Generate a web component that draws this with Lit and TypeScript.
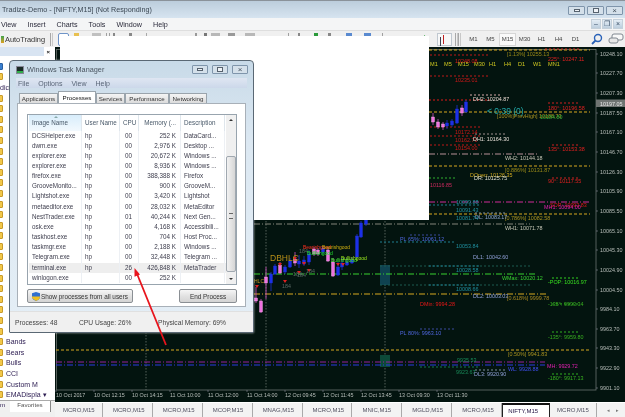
import { LitElement, html, css, svg } from "lit";
import { customElement } from "lit/decorators.js";

const PRICES: [string, number][] = [
  ["10248.10", 54], ["10227.70", 73], ["10207.30", 93], ["10187.50", 113], ["10167.10", 132],
  ["10146.70", 152], ["10126.30", 172], ["10105.90", 191], ["10085.50", 211], ["10065.10", 231],
  ["10045.30", 250], ["10024.90", 270], ["10004.50", 290], ["9984.10", 309], ["9963.70", 329],
  ["9943.30", 348], ["9922.90", 368], ["9901.10", 388],
];
const TIMES: [string, number][] = [
  ["10 Oct 2017", 56], ["10 Oct 12:15", 94], ["10 Oct 14:15", 132], ["11 Oct 10:00", 170], ["11 Oct 12:00", 208],
  ["11 Oct 14:00", 247], ["12 Oct 09:45", 285], ["12 Oct 11:45", 323], ["12 Oct 13:45", 361], ["13 Oct 09:30", 399], ["13 Oct 11:30", 437],
];
// x1, x2, y, colour, dash pattern
const LINES: [number, number, number, string, string][] = [
  [429, 590, 50, "#d8a820", "3 2"], [545, 580, 49, "#d02020", "2 2"], [430, 490, 55, "#c01818", "2 2"],
  [430, 490, 76, "#c01818", "2 2"], [470, 500, 95, "#d8a8a8", "2 2"], [429, 490, 100, "#e01818", "2 2"],
  [548, 578, 103, "#d02020", "2 2"], [429, 590, 112, "#d8a820", "3 2"], [430, 480, 127, "#c01818", "2 2"],
  [430, 480, 136, "#c01818", "2 2"], [430, 480, 145, "#c01818", "2 2"], [552, 578, 145, "#d02020", "2 2"],
  [475, 505, 134, "#a09090", "2 2"], [429, 537, 154, "#b89098", "6 2 1 2"], [429, 590, 166, "#d8a820", "3 2"],
  [552, 578, 178, "#d02020", "2 2"], [429, 455, 178, "#30b030", "2 2"], [429, 590, 202, "#d02a98", "6 2 1 2"],
  [429, 480, 205, "#1f7f90", "2 2"], [429, 590, 214, "#d8a820", "3 2"], [475, 505, 213, "#8090a0", "2 2"],
  [254, 530, 224, "#84847a", "6 2 1 2"], [380, 455, 242, "#1f7f90", "2 2"], [410, 440, 235, "#3a4aa0", "2 2"],
  [380, 530, 266, "#1d5a50", "2 2"], [429, 480, 266, "#1f7f90", "2 2"], [254, 537, 274, "#38d030", "6 2 1 2"],
  [552, 578, 278, "#30d020", "2 2"], [380, 530, 285, "#1d5a50", "2 2"], [429, 480, 285, "#1f7f90", "2 2"],
  [254, 548, 294, "#d8a820", "6 2 1 2"], [552, 578, 304, "#30b020", "2 2"], [552, 578, 332, "#30b020", "2 2"],
  [420, 455, 329, "#3a4aa0", "2 2"], [56, 590, 350, "#d8a820", "3 2"], [56, 545, 362, "#96209a", "6 2 1 2"],
  [56, 545, 365, "#2a3ae0", "6 2 1 2"], [420, 480, 367, "#147a50", "2 2"], [475, 505, 370, "#8090a0", "2 2"],
  [552, 578, 374, "#30b020", "2 2"],
];
// x, y, text, colour
const LABELS: [number, number, string, string][] = [
  [507, 56, "[1.13%] 10255.13", "#9a8a18"], [548, 61, "225°: 10247.11", "#e02020"], [455, 63, "10248.08", "#e01818"],
  [455, 82, "10235.01", "#d01818"], [473, 101, "DH2: 10204.87", "#e8d8d0"], [548, 110, "180°: 10196.58", "#e02020"],
  [497, 118, "[100%]PrevHigh] 10188.73", "#aa9220"], [540, 119, "10184.80", "#30b038"], [455, 134, "10172.14", "#d01818"],
  [455, 142, "10162.70", "#d01818"], [455, 150, "10154.00", "#d01818"], [473, 141, "DH1: 10164.30", "#e8e0d8"],
  [548, 151, "135°: 10153.38", "#e02020"], [505, 160, "WH2: 10144.18", "#c8c8b8"], [505, 172, "[0.886%] 10131.87", "#9a8a18"],
  [470, 177, "DOpen: 10126.35", "#d0aa20"], [474, 180, "DR: 10125.75", "#e0e0d0"], [548, 183, "90°: 10117.55", "#e02020"],
  [430, 187, "10116.85", "#d02a60"], [456, 204, "10099.88", "#2090a0"], [550, 207, "SOP: 10093.83", "#e01818"],
  [544, 209, "MH1: 10094.00", "#e020b0"], [456, 212, "10091.43", "#2090a0"], [505, 220, "[0.786%] 10082.58", "#aa9220"],
  [475, 219, "DL: 10083.17", "#90a8d0"], [456, 220, "10081.74", "#2090a0"], [505, 230, "WH1: 10071.78", "#c8c8b8"],
  [400, 241, "PL 65%: 10061.12", "#5068e0"], [456, 248, "10053.84", "#2090a0"], [473, 259, "DL1: 10042.60", "#90a0d8"],
  [456, 272, "10028.58", "#2090a0"], [502, 280, "WMax: 10020.12", "#38d030"], [548, 284, "-POP: 10016.97", "#38e020"],
  [456, 291, "10008.66", "#2090a0"], [473, 298, "DL2: 10003.03", "#90a0d8"], [507, 300, "[0.618%] 9999.78", "#aa8820"],
  [420, 306, "DMin: 9994.28", "#e81818"], [548, 306, "-135°: 9993.34", "#38b020"], [400, 335, "PL 80%: 9963.10", "#5068e0"],
  [548, 339, "-135°: 9959.80", "#38b020"], [508, 356, "[0.50%] 9941.83", "#aa9220"], [457, 362, "9935.53", "#188a58"],
  [547, 368, "MH: 9929.72", "#e020b0"], [508, 371, "WL: 9928.88", "#4050f0"], [456, 374, "9923.67", "#188a58"],
  [474, 376, "DL3: 9920.90", "#90a0d8"], [548, 380, "-180°: 9917.13", "#38b020"],
];
const TF: [number, string][] = [[430, "M1"], [444, "M5"], [458, "M15"], [474, "M30"], [489, "H1"], [504, "H4"], [518, "D1"], [533, "W1"], [548, "MN1"]];
// x, body top, body bottom, wick top, wick bottom, up?
const CANDLES: [number, number, number, number, number, boolean][] = [
  [256, 298, 301, 287, 303, false], [261, 301, 312, 299, 313, false], [266, 277, 283, 267, 299, false],
  [271, 274, 283, 272, 291, true], [275, 266, 274, 264, 275, true], [280, 265, 273, 262, 274, false],
  [285, 267, 272, 265, 274, true], [290, 261, 267, 258, 268, true], [295, 259, 263, 252, 266, false],
  [299, 261, 264, 255, 268, true], [304, 260, 264, 256, 266, true], [309, 254, 262, 250, 265, true],
  [314, 249, 254, 247, 256, false], [318, 250, 254, 248, 256, false], [323, 248, 252, 246, 254, true],
  [328, 250, 261, 247, 262, false], [333, 262, 276, 258, 277, false], [338, 267, 275, 262, 276, true],
  [342, 263, 267, 258, 270, true], [347, 262, 265, 258, 266, true], [352, 260, 263, 257, 264, true],
  [357, 236, 257, 234, 258, true], [361, 223, 237, 221, 238, true], [366, 220, 224, 218, 226, true],
  [433, 117, 122, 113, 125, false], [438, 122, 127, 119, 129, false], [443, 124, 127, 122, 130, false],
  [447, 123, 126, 120, 129, true], [452, 121, 125, 119, 127, true], [457, 109, 123, 105, 124, true],
  [462, 108, 113, 105, 116, false], [466, 102, 112, 100, 113, true],
];
const MARKS: [number, number][] = [[257, 285], [280, 263], [285, 280], [295, 257], [299, 271], [304, 262], [309, 269], [338, 263], [343, 263]];
const COUNTS: [number, number][] = [[282, 288], [293, 276], [297, 277], [299, 253], [306, 273]];
const TAGS: [number, number, string, string][] = [
  [303, 249, "Bearishgood", "#ff3020"], [322, 249, "Bearishgood", "#d0b010"], [307, 255, "Bullishgood", "#20e030"],
  [331, 262, "Bullishgood", "#40f030"], [341, 260, "Bullishgood", "#a0f020"], [254, 283, "HLC", "#c09a20"],
];

const ROWS: [string, string, string, string, string][] = [
  ["DCSHelper.exe", "hp", "00", "252 K", "DataCard..."], ["dwm.exe", "hp", "00", "2,976 K", "Desktop ..."],
  ["explorer.exe", "hp", "00", "20,672 K", "Windows ..."], ["explorer.exe", "hp", "00", "8,936 K", "Windows ..."],
  ["firefox.exe", "hp", "00", "388,388 K", "Firefox"], ["GrooveMonito...", "hp", "00", "900 K", "GrooveM..."],
  ["Lightshot.exe", "hp", "00", "3,420 K", "Lightshot"], ["metaeditor.exe", "hp", "00", "28,032 K", "MetaEditor"],
  ["NestTrader.exe", "hp", "01", "40,244 K", "Next Gen..."], ["osk.exe", "hp", "00", "4,168 K", "Accessibili..."],
  ["taskhost.exe", "hp", "00", "704 K", "Host Proc..."], ["taskmgr.exe", "hp", "00", "2,188 K", "Windows ..."],
  ["Telegram.exe", "hp", "00", "32,448 K", "Telegram ..."], ["terminal.exe", "hp", "26", "426,848 K", "MetaTrader"],
  ["winlogon.exe", "", "00", "252 K", ""],
];
const NAV = ["", "dic", "", "", "", "", "", "", "", "", "", "", "", "", "", "", "", "", "", "", "", "", "", "", "", "Bands", "Bears", "Bulls", "CCI", "Custom M", "EMADispla ▾"];
const TABS = ["MCRO,M15", "MCRO,M15", "MCRO,M15", "MCOP,M15", "MNAG,M15", "MCRO,M15", "MNIC,M15", "MGLD,M15", "MCRO,M15", "NIFTY,M15", "MCRO,M15"];
const PERIODS = ["M1", "M5", "M15", "M30", "H1", "H4", "D1"];
// left offset from the preceding mark, width, colour of the small toolbar marks that show above the blank sheet
const TOOLMARKS: [number, number, string][] = [
  [5, 5, "#e8c050"], [13, 9, "#c0c0c0"], [5, 1, "#a0a0a0"], [2, 1, "#a0a0a0"], [3, 2, "#888"], [14, 3, "#888"],
  [14, 1, "#a8a8a8"], [48, 2, "#999"], [7, 3, "#777"], [4, 9, "#b8b8b8"], [8, 7, "#999"], [10, 10, "#b8b8b8"],
  [33, 1, "#a0a0a0"], [9, 2, "#888"], [14, 4, "#2a9a3a"], [10, 3, "#888"], [15, 6, "#5a8ad0"], [12, 7, "#5a8ad0"], [11, 1, "#a0a0a0"],
];

@customElement("app-root")
export class AppRoot extends LitElement {
  static styles = css`
    :host { display: block; width: 625px; height: 417px; font-family: "Liberation Sans", Arial, sans-serif; }
    .root { position: relative; width: 625px; height: 417px; overflow: hidden; display: flex; flex-direction: column; background: #f0f0f0; color: #333; filter: blur(.25px); }
    .title { height: 18px; flex: none; box-sizing: border-box; border-top: 1px solid #8a929a; background: linear-gradient(#bccddc, #d6e4f0); display: flex; align-items: center; padding-left: 2px; font-size: 7.2px; color: #3c4854; }
    .title .sp, .menu .sp { flex: 1; }
    .caps { display: flex; gap: 2px; margin-top: 2px; padding-right: 2px; }
    .cap { width: 17px; height: 9px; box-sizing: border-box; border: 1px solid #7f95ab; background: #d4e0ea; border-radius: 1px; display: flex; align-items: center; justify-content: center; font-size: 8px; line-height: 7px; color: #46525e; }
    .cap i { display: block; width: 6px; height: 3px; border: 1px solid #56626e; box-sizing: border-box; background: #eef2f6; }
    .cap.mx i { height: 5px; }
    .menu { height: 12px; flex: none; background: #f4f5f6; display: flex; align-items: center; font-size: 7.2px; color: #2a2a3a; padding-left: 1px; gap: 11px; }
    .mdi { display: flex; gap: 1px; padding-right: 2px; }
    .mdi span { width: 10px; height: 10px; background: linear-gradient(#e4edf5, #bccede); border: 1px solid #c4d0da; box-sizing: border-box; font-size: 7px; line-height: 8px; text-align: center; color: #3a5068; }
    .tools { height: 17px; flex: none; box-sizing: border-box; border-top: 1px solid #dedede; background: #f0f0f0; display: flex; align-items: center; font-size: 7.4px; color: #333; padding-left: 1px; }
    .auto { display: flex; align-items: center; gap: 1px; width: 49px; flex: none; }
    .dot { width: 3px; height: 7px; background: linear-gradient(#3fa34d, #e0a020); }
    .tbox { width: 11px; height: 13px; flex: none; box-sizing: border-box; border: 1px solid #6f94c8; border-radius: 2px; background: #fff; margin-left: 5px; }
    .mark { display: block; height: 4px; flex: none; align-self: flex-start; margin-top: 2px; }
    .tgap { flex: 1; }
    .play { width: 0; height: 0; border-left: 5px solid #1a9a2a; border-top: 4px solid transparent; border-bottom: 4px solid transparent; margin-right: 8px; }
    .act { width: 15px; height: 13px; box-sizing: border-box; border: 1px solid #c0c8d0; background: #f8f8f8; position: relative; margin-right: 3px; }
    .act::after { content: ""; position: absolute; left: 5px; top: 1px; width: 1px; height: 9px; background: #c02020; box-shadow: -3px 2px 0 #404050; }
    .sep { width: 1px; height: 13px; background: #a8a8a8; margin-right: 2px; box-shadow: 2px 0 0 #c8c8c8; flex: none; }
    .periods { display: flex; margin: 0 5px 0 4px; font-size: 6px; color: #444; }
    .periods span { width: 17px; height: 13px; line-height: 13px; text-align: center; box-sizing: border-box; }
    .periods .on { background: #fafafa; border: 1px solid #d6d6d6; line-height: 11px; }
    .tico { width: 18px; height: 14px; display: block; flex: none; }
    .main { flex: 1; min-height: 0; display: flex; }
    .nav { width: 55px; flex: none; background: #fff; display: flex; flex-direction: column; overflow: hidden; font-size: 7px; color: #2a1a50; padding-bottom: 5px; box-sizing: border-box; background-clip: content-box; }
    .navhead { height: 9px; flex: none; background: linear-gradient(90deg, #d8e4f2 80%, #fff 80%); display: flex; align-items: center; justify-content: flex-end; font-size: 6px; font-weight: bold; color: #111; padding-right: 5px; box-sizing: border-box; }
    .navlist { flex: 1; min-height: 0; overflow: hidden; display: flex; flex-direction: column; justify-content: flex-end; }
    .navrow { height: 10.6px; flex: none; display: flex; align-items: center; gap: 3px; white-space: nowrap; }
    .navrow.group { padding-left: 0; }
    .navrow.account .folder { background: #3a7fd0; border-color: #2a5fa0; }
    .folder { width: 7px; height: 7px; margin-left: -4px; border-radius: 1px; background: #f2c84a; border: 1px solid #c89a2a; box-sizing: border-box; flex: none; }
    .navtabs { height: 12px; flex: none; background: #f0f0f0; border-top: 1px solid #aaa; display: flex; font-size: 6.2px; color: #555; box-sizing: border-box; }
    .navtabs span:first-child { width: 10px; color: #2a1a50; }
    .navtabs span:last-child { width: 40px; text-align: center; background: #fff; border-right: 1px solid #888; }
    .work { flex: 1; min-width: 0; display: flex; flex-direction: column; }
    .chart { flex: 1; display: block; min-height: 0; width: 100%; background: #03140f; }
    .tabs { height: 15px; flex: none; background: #f3f3f3; display: flex; font-size: 6px; color: #505060; border-top: 1px solid #fff; box-sizing: border-box; }
    .tab { width: 50px; line-height: 14px; box-sizing: border-box; padding-left: 10px; border-right: 1px solid #aaa; white-space: nowrap; }
    .tab:first-child { width: 48px; padding-left: 8px; }
    .tab.on { background: #fff; color: #201040; border: 1px solid #222; border-top: 2px solid #111; border-bottom: 0; width: 48px; margin-right: -3px; padding-left: 5px; line-height: 12px; position: relative; }
    .arrows { padding-left: 10px; line-height: 14px; letter-spacing: 6px; color: #777; font-size: 5px; }
    .blank { position: absolute; left: 60px; top: 36px; width: 369px; height: 184px; background: #fff; }
    .tm { position: absolute; left: 9px; top: 60px; width: 245px; height: 273px; box-sizing: border-box; border: 1px solid #5a6874; border-radius: 4px 4px 1px 1px; background: linear-gradient(#c8dae8, #dce8f2 30%, #e4eef6); display: flex; flex-direction: column; padding: 0 7px 0 7px; font-size: 6.3px; color: #3c3c4c; box-shadow: 0 0 2px rgba(255,255,255,.7); }
    .tmtitle { height: 17px; flex: none; display: flex; align-items: center; font-size: 7.3px; color: #4a5560; gap: 3px; margin-left: -1px; }
    .tmtitle .ic { width: 8px; height: 8px; background: #1b2b26; border: 1px solid #889; box-sizing: border-box; box-shadow: inset 0 -2px 0 #2fae4a; }
    .tmtitle .sp { flex: 1; }
    .tmtitle .caps { gap: 4px; padding-right: 0; margin: 0 -2px 0 0; }
    .tmtitle .cap { width: 16px; }
    .tmmenu { height: 10px; flex: none; margin: 0 -1px; background: linear-gradient(#dfe6f2, #ccd8ea); display: flex; align-items: center; gap: 9px; padding-left: 2px; font-size: 7px; color: #5a6678; }
    .tmtabs { height: 15px; flex: none; display: flex; align-items: flex-end; padding-left: 2px; font-size: 6.2px; }
    .tmtab { height: 10px; line-height: 10px; box-sizing: border-box; border: 1px solid #9aa4ac; border-bottom: 0; background: linear-gradient(#f4f4f4, #dcdcdc); text-align: center; color: #333; }
    .tmtab.on { height: 12px; line-height: 11px; background: #fff; color: #111; }
    .panel { flex: none; height: 204px; box-sizing: border-box; background: #fff; border: 1px solid #a8b0b8; padding: 10px 8px 0 9px; display: flex; flex-direction: column; }
    .list { height: 171px; flex: none; box-sizing: border-box; border: 1px solid #98a4ae; display: flex; }
    .cols { flex: 1; min-width: 0; display: flex; flex-direction: column; padding-left: 1px; }
    .grid { display: grid; grid-template-columns: 53px 38px 19px 42px 44px; }
    .grid > span { padding-left: 3px; white-space: nowrap; overflow: hidden; box-sizing: border-box; border-right: 1px solid #edf0f4; }
    .grid .r { text-align: right; padding: 0 4px 0 0; }
    .grid .c { padding-left: 5px; }
    .head { height: 15.5px; line-height: 15px; position: relative; font-size: 6.3px; color: #4a5a6a; background: #fff; }
    .head > span { border-right: 1px solid #dfe6ec; }
    .head > span:first-child { background: linear-gradient(#d8edfb, #f2f9fe); }
    .head > .tri { position: absolute; left: 25px; top: 1px; width: 0; height: 0; padding: 0; border: 2px solid transparent; border-bottom-color: #8aa; border-top: 0; }
    .row { height: 10.16px; line-height: 10px; }
    .row.hi { background: #eeeeee; }
    .scroll { width: 10px; flex: none; background: #f0f0f0; display: flex; flex-direction: column; align-items: center; justify-content: space-between; position: relative; color: #444; }
    .up, .down { width: 0; height: 0; border: 2.5px solid transparent; margin: 4px 0; }
    .up { border-bottom-color: #333; border-top: 0; }
    .down { border-top-color: #333; border-bottom: 0; }
    .thumb { position: absolute; left: 0; top: 41px; width: 10px; height: 116px; box-sizing: border-box; border: 1px solid #a0a8b0; border-radius: 2px; background: linear-gradient(90deg, #f2f2f2, #d6d6d6); }
    .thumb::after { content: ""; position: absolute; left: 2px; top: 56px; width: 4px; height: 4px; border-top: 1px solid #666; border-bottom: 1px solid #666; }
    .btns { flex: none; display: flex; justify-content: space-between; margin-top: 4px; }
    .btn { height: 14px; box-sizing: border-box; border: 1px solid #8a8f94; border-radius: 2px; background: linear-gradient(#f6f6f6, #e2e2e2 50%, #d4d4d4); display: flex; align-items: center; justify-content: center; gap: 1px; font-size: 6.4px; color: #333; padding: 0; }
    .btn.show { width: 106px; }
    .btn.end { width: 58px; }
    .btn svg { width: 8px; height: 9px; display: block; }
    .statusgap { flex: none; height: 4px; }
    .status { flex: 1; margin: 0 -7px; background: #f0f0f0; border-top: 1px solid #e0e0e0; display: flex; align-items: center; padding-left: 5px; font-size: 6.7px; color: #444; }
    .status span:nth-child(1) { width: 64px; }
    .status span:nth-child(2) { width: 79px; }
    .pointer { position: absolute; left: 0; top: 0; width: 625px; height: 417px; pointer-events: none; }
  `;

  private chart() {
    return html`<svg class="chart" viewBox="55 47 570 355" font-family="Liberation Sans, Arial, sans-serif">
      ${[146, 266, 385].map((x) => svg`<line x1=${x} x2=${x} y1="50" y2="390" stroke="#55605a" stroke-dasharray="1.5 1.5" />`)}
      <rect x="380" y="265" width="10" height="20" fill="#0f4250" />
      <rect x="380" y="355" width="10" height="12" fill="#0c4a38" />
      <rect x="56.5" y="49.5" width="539.5" height="340.5" fill="none" stroke="#6a726e" stroke-width=".8" />
      ${LINES.map(([a, b, y, c, d]) => svg`<line x1=${a} x2=${b} y1=${y} y2=${y} stroke=${c} stroke-width="1" stroke-dasharray=${d} />`)}
      ${CANDLES.map(([x, t, b, wt, wb, up]) => svg`
        <line x1=${x} x2=${x} y1=${wt} y2=${wb} stroke=${up ? "#2030d0" : "#d050c0"} stroke-width=".8" />
        <rect x=${x - 1.5} y=${t} width="3" height=${b - t} fill=${up ? "#1c30e8" : "#f070e0"} stroke=${up ? "#2030d0" : "#f4b0e8"} stroke-width=".4" />`)}
      ${MARKS.map(([x, y]) => svg`<path d="M${x - 2} ${y}h4l-2 3z" fill="#e02020" />`)}
      <g font-size="5.3" fill="#5a6a66">${COUNTS.map(([x, y]) => svg`<text x=${x} y=${y}>184</text>`)}</g>
      <text x="270" y="261" font-size="8.500" fill="#b89018">DBHLC</text>
      <g font-size="5">${TAGS.map(([x, y, t, c]) => svg`<text x=${x} y=${y} fill=${c}>${t}</text>`)}</g>
      <g font-size="5.4">${LABELS.map(([x, y, t, c]) => svg`<text x=${x} y=${y} fill=${c}>${t}</text>`)}</g>
      <g font-size="5.6" fill="#d0c820">${TF.map(([x, t]) => svg`<text x=${x} y="66">${t}</text>`)}</g>
      <text x="487" y="114" font-size="8.500" fill="#22a8a8">&lt; 0:39 (0)</text>
      <g font-size="5.4" fill="#b8beba">
        ${PRICES.map(([t, y]) => svg`<line x1="596" x2="598" y1=${y} y2=${y} stroke="#889" stroke-width=".6" /><text x="600" y=${y + 2}>${t}</text>`)}
        ${TIMES.map(([t, x]) => svg`<line x1=${x} x2=${x} y1="390" y2="392" stroke="#889" stroke-width=".6" /><text x=${x} y="397">${t}</text>`)}
      </g>
      <rect x="596" y="99.500" width="29" height="7.500" fill="#6f7472" />
      <text x="600" y="105.500" font-size="5.4" fill="#e8e8e8">10197.05</text>
    </svg>`;
  }

  private taskManager() {
    const tabs: [string, number, boolean][] = [["Applications", 39, false], ["Processes", 38, true], ["Services", 29, false], ["Performance", 44, false], ["Networking", 38, false]];
    return html`<div class="tm">
      <div class="tmtitle">
        <span class="ic"></span><span>Windows Task Manager</span><span class="sp"></span>
        <div class="caps"><span class="cap"><i></i></span><span class="cap mx"><i></i></span><span class="cap">×</span></div>
      </div>
      <div class="tmmenu"><span>File</span><span>Options</span><span>View</span><span>Help</span></div>
      <div class="tmtabs">${tabs.map(([t, w, on]) => html`<span class="tmtab ${on ? "on" : ""}" style="width:${w}px">${t}</span>`)}</div>
      <div class="panel">
        <div class="list">
          <div class="cols">
            <div class="grid head"><span>Image Name</span><span>User Name</span><span>CPU</span><span class="r">Memory (...</span><span>Description</span><span class="tri"></span></div>
            ${ROWS.map((r) => html`<div class="grid row ${r[0] === "terminal.exe" ? "hi" : ""}"><span>${r[0]}</span><span>${r[1]}</span><span class="c">${r[2]}</span><span class="r">${r[3]}</span><span>${r[4]}</span></div>`)}
          </div>
          <div class="scroll"><span class="up"></span><span class="thumb"></span><span class="down"></span></div>
        </div>
        <div class="btns">
          <div class="btn show">
            <svg viewBox="0 0 8 9"><path d="M4 0l4 1.200V5C8 7 6 8.300 4 9 2 8.300 0 7 0 5V1.200z" fill="#2f6fd0" /><path d="M4 0v4.500H0V5c0 .5.100.9.300 1.300L4 9c2-.7 4-2 4-4v-.5H4z" fill="#f0c020" /></svg>
            <span>Show processes from all users</span>
          </div>
          <div class="btn end">End Process</div>
        </div>
      </div>
      <div class="statusgap"></div>
      <div class="status"><span>Processes: 48</span><span>CPU Usage: 26%</span><span>Physical Memory: 69%</span></div>
    </div>`;
  }

  render() {
    return html`<div class="root">
      <div class="title">
        <span>Tradize-Demo - [NIFTY,M15] (Not Responding)</span><span class="sp"></span>
        <div class="caps"><span class="cap"><i></i></span><span class="cap mx"><i></i></span><span class="cap">×</span></div>
      </div>
      <div class="menu">
        <span>View</span><span>Insert</span><span>Charts</span><span>Tools</span><span>Window</span><span>Help</span><span class="sp"></span>
        <div class="mdi"><span>–</span><span>❐</span><span>×</span></div>
      </div>
      <div class="tools">
        <div class="auto"><span class="dot"></span><span>AutoTrading</span></div>
        <span class="sep"></span><span class="tbox"></span>
        ${TOOLMARKS.map(([gap, w, c]) => html`<span class="mark" style="margin-left:${gap}px;width:${w}px;background:${c}"></span>`)}
        <span class="tgap"></span>
        <span class="play"></span><span class="act"></span><span class="sep"></span><span class="sep"></span>
        <div class="periods">${PERIODS.map((p) => html`<span class=${p === "M15" ? "on" : ""}>${p}</span>`)}</div>
        <svg class="tico" viewBox="0 0 18 14"><circle cx="9" cy="6" r="3.500" fill="none" stroke="#2a62b8" stroke-width="1.400" /><path d="M6.500 8.500L3 12" stroke="#2a62b8" stroke-width="1.800" /></svg>
        <svg class="tico" viewBox="0 0 18 14"><rect x="5" y="2" width="11" height="6" rx="2" fill="#f8f8f8" stroke="#808890" /><rect x="2" y="6" width="9" height="5" rx="2" fill="#e8e8e8" stroke="#808890" /></svg>
      </div>
      <div class="main">
        <div class="nav">
          <div class="navhead">×</div>
          <div class="navlist">
            <div class="navrow account"><span class="folder"></span></div>
            ${NAV.map((n) => n === "dic"
              ? html`<div class="navrow group"><span>${n}</span></div>`
              : html`<div class="navrow"><span class="folder"></span><span>${n}</span></div>`)}
          </div>
          <div class="navtabs"><span>m</span><span>Favorites</span></div>
        </div>
        <div class="work">
          ${this.chart()}
          <div class="tabs">
            ${TABS.map((t) => html`<span class="tab ${t.startsWith("NIFTY") ? "on" : ""}">${t}</span>`)}
            <span class="arrows">◂▸</span>
          </div>
        </div>
      </div>
      <div class="blank"></div>
      ${this.taskManager()}
      <svg class="pointer" viewBox="0 0 625 417"><path d="M166 345L137.500 275" stroke="#e8141c" stroke-width="1.800" fill="none" /><path d="M134.500 268l5.500 6.500-5.500 2.200z" fill="#e8141c" /></svg>
    </div>`;
  }
}
